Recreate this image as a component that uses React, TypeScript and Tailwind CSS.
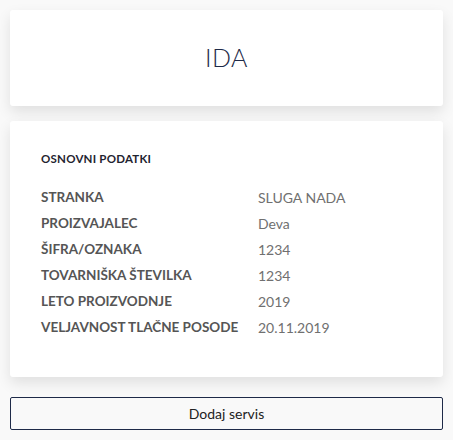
const rows = [
  { label: 'STRANKA', value: 'SLUGA NADA' },
  { label: 'PROIZVAJALEC', value: 'Deva' },
  { label: 'ŠIFRA/OZNAKA', value: '1234' },
  { label: 'TOVARNIŠKA ŠTEVILKA', value: '1234' },
  { label: 'LETO PROIZVODNJE', value: '2019' },
  { label: 'VELJAVNOST TLAČNE POSODE', value: '20.11.2019' },
]

export default function App() {
  return (
    <div
      className="min-h-[440px] bg-[#f9f9f9] p-[10px] flex flex-col"
      style={{ fontFamily: 'Lato, "Open Sans", sans-serif' }}
    >
      <div className="bg-white rounded-[3px] h-[96px] flex items-center justify-center shadow-[0_6px_14px_rgba(0,0,0,0.1)]">
        <h1 className="text-[25px] font-light text-[#1e2a48] tracking-[0.02em]">IDA</h1>
      </div>

      <div className="mt-[15px] bg-white rounded-[3px] pt-[30px] pb-[37px] pl-[31px] pr-[31px] shadow-[0_6px_14px_rgba(0,0,0,0.1)]">
        <div className="text-[11.5px] leading-4 font-bold text-[#1f2430] tracking-[0.02em]">OSNOVNI PODATKI</div>
        <div className="mt-[17px] flex flex-col">
          {rows.map((r) => (
            <div key={r.label} className="flex h-[26px] items-center">
              <span className="w-[217px] text-[13.5px] font-bold text-[#555]">{r.label}</span>
              <span className="text-[14px] text-[#707070]">{r.value}</span>
            </div>
          ))}
        </div>
      </div>

      <button className="mt-[20px] h-[33px] w-full border border-[#1e2a48] rounded-[2px] bg-[#f9f9f9] text-[14px] text-[#222]">
        Dodaj servis
      </button>
    </div>
  )
}
